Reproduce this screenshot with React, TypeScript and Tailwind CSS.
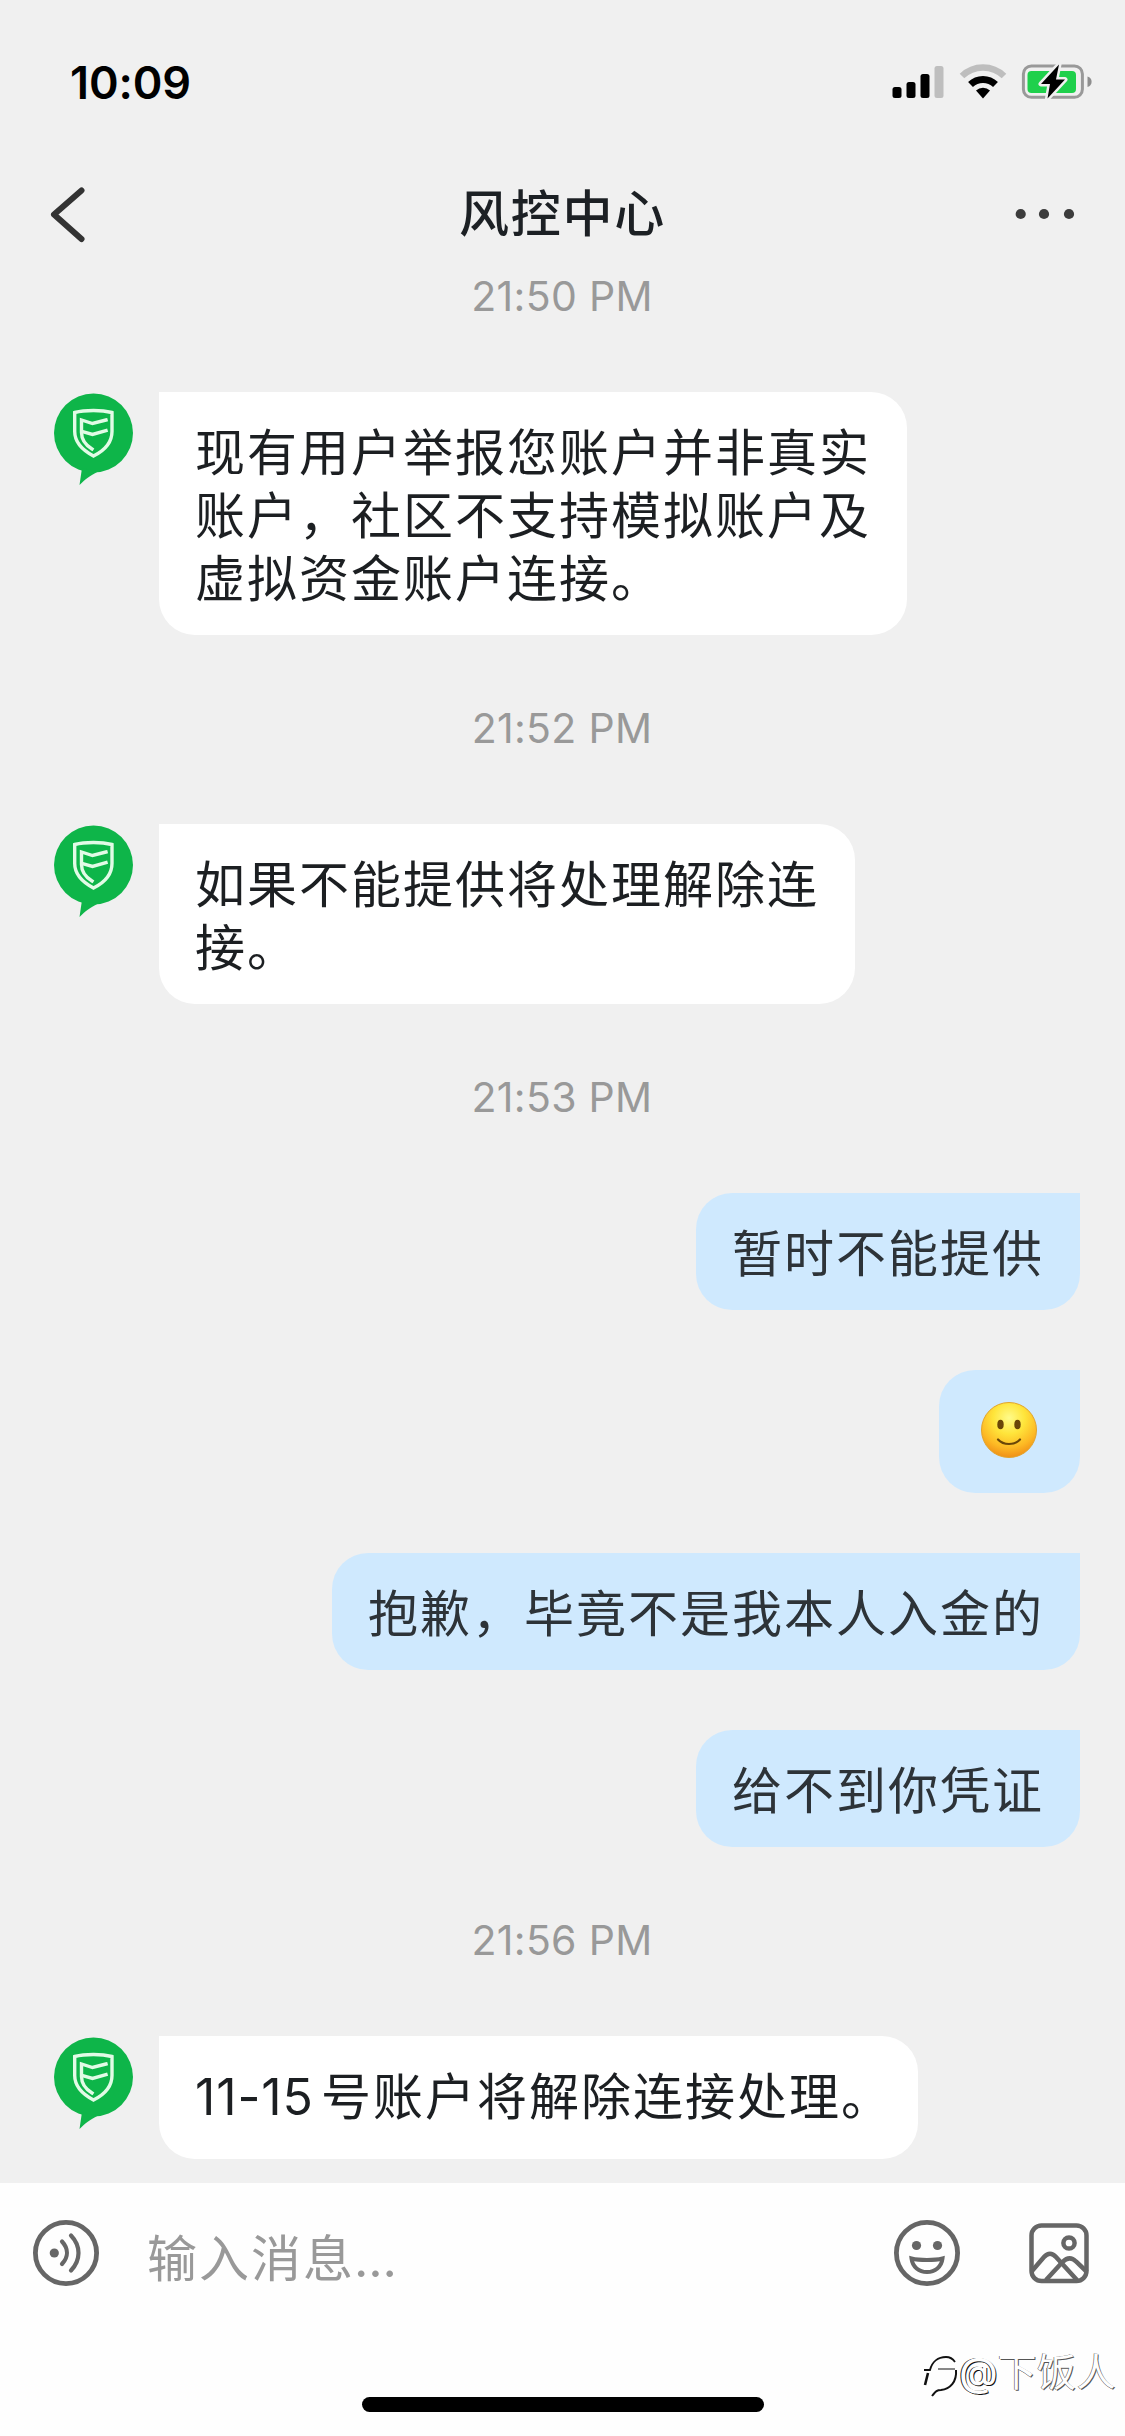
import { ReactNode } from 'react';

type Message = {
  id: number;
  from: 'agent' | 'me';
  lines?: string[];
  emoji?: boolean;
  tall?: boolean;
};

type Group = {
  time: string;
  messages: Message[];
};

const groups: Group[] = [
  {
    time: '21:50 PM',
    messages: [
      {
        id: 1,
        from: 'agent',
        lines: ['现有用户举报您账户并非真实', '账户，社区不支持模拟账户及', '虚拟资金账户连接。'],
      },
    ],
  },
  {
    time: '21:52 PM',
    messages: [{ id: 2, from: 'agent', lines: ['如果不能提供将处理解除连', '接。'] }],
  },
  {
    time: '21:53 PM',
    messages: [
      { id: 3, from: 'me', lines: ['暂时不能提供'] },
      { id: 4, from: 'me', emoji: true },
      { id: 5, from: 'me', lines: ['抱歉，毕竟不是我本人入金的'] },
      { id: 6, from: 'me', lines: ['给不到你凭证'] },
    ],
  },
  {
    time: '21:56 PM',
    messages: [{ id: 7, from: 'agent', lines: ['11-15号账户将解除连接处理。'], tall: true }],
  },
];

function StatusBar() {
  return (
    <div className="flex h-[160px] items-start justify-between pl-[70px] pr-[33px] pt-[55px]">
      <span className="text-[45px] font-semibold leading-[55px] tracking-[-0.1px] text-black">10:09</span>
      <div className="flex items-center pt-[9px]">
        <svg width="52" height="35" viewBox="0 0 52 35">
          <rect x="0.500" y="23" width="9" height="11" rx="2.500" fill="#000" />
          <rect x="14.500" y="18" width="9" height="16" rx="2.500" fill="#000" />
          <rect x="28.500" y="10" width="9" height="24" rx="2.500" fill="#000" />
          <rect x="42.500" y="2" width="9" height="32" rx="2.500" fill="#bebebe" />
        </svg>
        <svg className="ml-[15px]" width="48" height="35" viewBox="0 0 48 35">
          <path d="M3 12a30 30 0 0 1 42 0" fill="none" stroke="#bebebe" strokeWidth="6.500" />
          <path d="M11.500 20.500a18 18 0 0 1 25 0" fill="none" stroke="#000" strokeWidth="7" />
          <path d="M17 26.500a10.500 10.500 0 0 1 14 0l-7 8z" fill="#000" />
        </svg>
        <svg className="ml-[13px]" width="72" height="35" viewBox="0 0 72 35">
          <rect x="3.400" y="1.900" width="59" height="31.400" rx="8" fill="none" stroke="#999" strokeWidth="3" />
          <rect x="7.500" y="7" width="48.500" height="22" rx="4" fill="#1fd04c" />
          <path d="M67.500 12.500c5.500 1.500 5.500 9 0 10.500z" fill="#8e8e8e" />
          <path
            d="M39 .5 21 20h9L27.500 34.500 45 15.500h-9z"
            fill="#000"
            stroke="#f0f0f0"
            strokeWidth="5"
            paintOrder="stroke"
            strokeLinejoin="round"
          />
        </svg>
      </div>
    </div>
  );
}

function Header() {
  return (
    <header className="flex h-[108px] items-center justify-between px-[50px]">
      <svg width="60" height="60" viewBox="0 0 60 60" fill="none" stroke="#333" strokeWidth="6" strokeLinecap="round" strokeLinejoin="round">
        <path d="M31.500 6.500 4 30.500l27.500 24.500" />
      </svg>
      <h1 className="mt-[1px] text-[50px] font-medium leading-[63px] tracking-[1.8px] text-[#1c2024]">风控中心</h1>
      <svg width="60" height="12" viewBox="0 0 60 12" fill="#3c3c3c">
        <circle cx="5.700" cy="6" r="5.100" />
        <circle cx="29" cy="6" r="5.100" />
        <circle cx="54" cy="6" r="5.100" />
      </svg>
    </header>
  );
}

function Avatar() {
  return (
    <svg className="ml-[50px] mr-[21px] shrink-0" width="88" height="96" viewBox="0 0 88 96">
      <circle cx="43.500" cy="41" r="39.500" fill="#0eb549" />
      <path d="M32 76l-2.500 17c6-6 10-9 18.500-13.500z" fill="#0eb549" />
      <g fill="none" stroke="#e2fbe6" strokeWidth="3.400" strokeLinecap="square">
        <path d="M43.500 18.500c-6 0-13 .5-18.800 2v19c0 11 8.500 19 18.800 24.500C53.500 59 62 51 62 39.500v-19c-6-1.500-12.500-2-18.500-2z" />
        <path d="M56 28l-13.500 3.500-11-3.500v12.500c0 8 4 12.500 10.500 16.500" />
        <path d="M56 38.500l-13.500 4-10-3" />
      </g>
    </svg>
  );
}

function SmileEmoji() {
  return (
    <svg className="mb-[3px] mr-[2px]" width="58" height="58" viewBox="0 0 58 58">
      <defs>
        <radialGradient id="face" cx="50%" cy="28%" r="72%">
          <stop offset="0" stopColor="#fffb8a" />
          <stop offset="0.400" stopColor="#ffe53b" />
          <stop offset="0.750" stopColor="#fdb924" />
          <stop offset="1" stopColor="#f08f16" />
        </radialGradient>
      </defs>
      <circle cx="29" cy="29" r="27.500" fill="url(#face)" stroke="#e2a42c" strokeWidth="1" />
      <ellipse cx="20.500" cy="23.500" rx="3.200" ry="4.700" fill="#6a4608" />
      <ellipse cx="37.500" cy="23.500" rx="3.200" ry="4.700" fill="#6a4608" />
      <path d="M18 38.500c5.500 6 16.500 6 22 0" fill="none" stroke="#6a4608" strokeWidth="2.200" strokeLinecap="round" />
    </svg>
  );
}

function TimeLabel({ children }: { children: ReactNode }) {
  return (
    <div className="flex h-[189px] items-center justify-center pb-[3px] pr-[1px] text-[41px] leading-[48px] tracking-[0.3px] text-[#999999]">
      {children}
    </div>
  );
}

// Latin digits sit tighter than the Chinese text and keep a small gap after them
function renderLine(line: string) {
  const match = line.match(/^([\d-]+)(.*)$/);
  if (!match) return line;
  return (
    <>
      <span className="mr-[7px] tracking-[0.9px]">{match[1]}</span>
      {match[2]}
    </>
  );
}

function MessageRow({ message }: { message: Message }) {
  const text = message.lines?.map((line) => (
    <div key={line} className="whitespace-nowrap">
      {renderLine(line)}
    </div>
  ));

  if (message.from === 'agent') {
    return (
      <div className="flex items-start">
        <Avatar />
        <div
          className={
            message.tall
              ? 'flex h-[123px] w-[759px] items-center rounded-[36px] rounded-tl-none bg-white pl-[36px] text-[#1c1f22]'
              : 'rounded-[36px] rounded-tl-none bg-white px-[36px] pb-[24px] pt-[30px] text-[#1c1f22]'
          }
        >
          {text}
        </div>
      </div>
    );
  }

  return (
    <div className="flex justify-end pr-[45px]">
      {message.emoji ? (
        <div className="flex h-[123px] w-[141px] items-center justify-center rounded-[36px] rounded-tr-none bg-[#cfe9fe]">
          <SmileEmoji />
        </div>
      ) : (
        <div className="rounded-[36px] rounded-tr-none bg-[#cfe9fe] px-[36px] pb-[24px] pt-[30px] text-[#2d3338]">
          {text}
        </div>
      )}
    </div>
  );
}

function InputBar() {
  return (
    <footer className="relative h-[253px] bg-[#fefefe]">
      <div className="flex h-[140px] items-center pl-[32px] pr-[34px] text-[#666666]">
        <svg width="68" height="68" viewBox="0 0 68 68" fill="none" stroke="currentColor" strokeWidth="4.800" strokeLinecap="round">
          <circle cx="34" cy="34" r="30.600" />
          <circle cx="22.300" cy="34" r="4.600" fill="currentColor" stroke="none" />
          <path d="M30 22.500c6.500 7 6.500 15.500 0 22.500" strokeWidth="4.200" />
          <path d="M39 16.500c10 10.500 10 24.500 0 35" strokeWidth="4.200" />
        </svg>
        <span className="ml-[47px] mt-[13px] flex-1 text-[50px] leading-[63px] tracking-[2px] text-[#999999]">
          输入消息<span className="-ml-[1px] tracking-[-0.1px]">...</span>
        </span>
        <svg width="68" height="68" viewBox="0 0 68 68" fill="none" stroke="currentColor" strokeWidth="4.800">
          <circle cx="34" cy="34" r="30.600" />
          <circle cx="23.500" cy="26.500" r="4.600" fill="currentColor" stroke="none" />
          <circle cx="44.500" cy="26.500" r="4.600" fill="currentColor" stroke="none" />
          <path d="M18.500 39.500c8 2 23 2 31 0-1 8.500-7.500 13.500-15.500 13.500s-14.500-5-15.500-13.500z" strokeWidth="4" />
        </svg>
        <svg className="ml-[66px]" width="64" height="64" viewBox="0 0 64 64" fill="none" stroke="currentColor" strokeWidth="4.500">
          <rect x="4.500" y="4.500" width="55" height="55.500" rx="10" />
          <circle cx="42" cy="22" r="5.600" />
          <path d="M5 50l12-14c4-4.500 8-4.500 12 0l21 23" />
          <path d="M19 59l16.500-18c4.500-4.500 9-5 13.500-.5L60 51" />
        </svg>
      </div>
      <div className="mx-auto mt-[74px] h-[15px] w-[402px] rounded-full bg-black" />
      <div className="absolute right-[9px] top-[161px] flex items-center text-[39px] leading-[56px] text-[#fefefe]">
        <svg className="mt-[7px]" width="36" height="46" viewBox="0 0 36 46" fill="none" stroke="#111">
          <path d="M1 17h6c2-8 8-13 16-13 4 0 7 2 9 5" strokeWidth="1.800" />
          <path d="M33 17c1 12-6 19-15 20-4 0-5 1-9 6" strokeWidth="2" />
          <path d="M5 20l-3 12" strokeWidth="2.600" />
          <path d="M15 16h17" strokeWidth="1" />
        </svg>
        <span className="text-[39px] font-medium [text-shadow:-1px_0_0_#222,1px_1px_0_#111]">@</span>
        <span className="tracking-[0.500px] [text-shadow:-0.5px_0_0_#444,1px_1px_0_#555]">下饭人</span>
      </div>
    </footer>
  );
}

export default function App() {
  return (
    <div className="flex h-[2436px] w-[1125px] flex-col overflow-hidden bg-[#f0f0f0] font-[Inter,'Noto_Sans_CJK_SC',sans-serif]">
      <StatusBar />
      <Header />
      <main className="-mt-[65px] flex-1 text-[50px] leading-[63px] tracking-[2px]">
        {groups.map((group) => (
          <section key={group.time}>
            <TimeLabel>{group.time}</TimeLabel>
            <div className="flex flex-col gap-[60px]">
              {group.messages.map((message) => (
                <MessageRow key={message.id} message={message} />
              ))}
            </div>
          </section>
        ))}
      </main>
      <InputBar />
    </div>
  );
}
